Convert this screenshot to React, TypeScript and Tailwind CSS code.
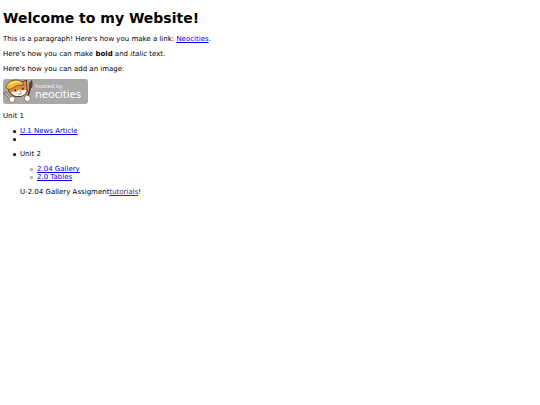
import React from "react";

const link = "text-[#0000ee] underline";
const item =
  "flex gap-[4px] before:mt-[3px] before:size-[3px] before:shrink-0 before:rounded-full before:bg-black before:content-['']";
const subItem =
  "flex gap-[4px] before:mt-[3px] before:size-[3px] before:shrink-0 before:rounded-full before:border before:border-[#777777] before:content-['']";

function HostedBadge() {
  return (
    <svg
      role="img"
      aria-label="hosted by neocities"
      viewBox="0 0 85 25"
      className="block h-[25px] w-[85px]"
    >
      <rect x="0" y="0" width="85" height="25" rx="3" fill="#a9a9a9" />
      {/* wrench */}
      <path d="M1.6 13.2 L8 20" stroke="#4e4e4e" strokeWidth="2.4" />
      <path d="M0.6 14.6 L2.4 15 L3 12.6" fill="none" stroke="#4e4e4e" strokeWidth="1" />
      <path d="M2 13.6 L8 20" stroke="#dedede" strokeWidth="1.1" />
      {/* brush */}
      <path d="M24.8 18 L27.4 8" stroke="#5b2a20" strokeWidth="1.6" />
      <path d="M26.4 8 Q25.4 4 28.6 1.4 Q30 5 28.6 8.6 Z" fill="#a02c28" stroke="#43201c" strokeWidth="0.6" />
      {/* cat head */}
      <path
        d="M5.6 11.6 L6 6 L12 3 L17.4 3.6 L23.4 1 L23.8 8.2 Q25.6 12.4 22.4 15.2 Q18.4 18.6 13 17.6 Q7.2 16.6 5.6 11.6 Z"
        fill="#e58a3c"
        stroke="#4f3018"
        strokeWidth="0.9"
      />
      <path d="M8.2 13.4 Q11.4 11.6 14 12.6 L16 10.8 L18.4 11.6 Q21.4 10 23.4 11.6 Q23 15.4 18.6 16.8 Q12 18 8.2 13.4 Z" fill="#fffaf2" />
      {/* helmet */}
      <path
        d="M3 8.8 Q3.4 3.6 8.8 1.6 Q15.6 -0.4 20 3.6 L20.6 6 Q13.6 5.2 8.4 10 Q5.4 11.2 3 8.8 Z"
        fill="#eebb45"
        stroke="#6d4a18"
        strokeWidth="0.8"
      />
      <path d="M6.6 5.6 Q10.4 2.2 16 2.8" fill="none" stroke="#ffe38f" strokeWidth="1.2" />
      <ellipse cx="12.2" cy="11.4" rx="0.8" ry="1.2" fill="#2c2018" />
      <ellipse cx="19.8" cy="9.8" rx="0.8" ry="1.2" fill="#2c2018" />
      <path d="M16.2 12.2 L18 12 L17.2 13.2 Z" fill="#7c3329" />
      <path d="M15 15 Q17.2 15.8 19 14" fill="none" stroke="#5b3d22" strokeWidth="0.6" />
      {/* paws */}
      <circle cx="9" cy="20.4" r="3" fill="#ffffff" stroke="#6d5a4c" strokeWidth="0.7" />
      <circle cx="24.4" cy="19.4" r="3" fill="#ffffff" stroke="#6d5a4c" strokeWidth="0.7" />
      <text x="32" y="9" fill="#eeeeee" fontSize="6" fontFamily="'Noto Sans', sans-serif">
        hosted by
      </text>
      <text x="32" y="19" fill="#ffffff" fontSize="11" fontFamily="'Noto Sans', sans-serif">
        neocities
      </text>
    </svg>
  );
}

export default function App() {
  return (
    <main className="min-h-screen bg-white px-[3px] pt-[10px] font-['DejaVu_Sans',sans-serif] text-[7px] leading-[8px] text-black">
      <h1 className="text-[14px] leading-[16px] font-bold">Welcome to my Website!</h1>
      <p className="mt-[9px]">
        This is a paragraph! Here's how you make a link:{" "}
        <a href="#neocities" className={link}>Neocities</a>.
      </p>
      <p className="mt-[7px]">
        Here's how you can make <strong className="font-bold">bold</strong> and{" "}
        <em className="italic">italic</em> text.
      </p>
      <p className="mt-[7px]">Here's how you can add an image:</p>
      <div className="mt-[6px]">
        <HostedBadge />
      </div>
      <p className="mt-[8px]">Unit 1</p>
      <ul className="mt-[7px] pl-[10px]">
        <li className={item}>
          <a href="#news-article" className={link}>U.1 News Article</a>
        </li>
        <li className={`${item} min-h-[8px]`}></li>
        <li className={`${item} mt-[7px]`}>
          <div>
            <p>Unit 2</p>
            <ul className="mt-[7px] pl-[10px]">
              <li className={subItem}>
                <a href="#gallery" className={link}>2.04 Gallery</a>
              </li>
              <li className={subItem}>
                <a href="#tables" className={link}>2.0 Tables</a>
              </li>
            </ul>
            <p className="mt-[7px]">
              U-2.04 Gallery Assigment
              <a href="#tutorials" className="text-[#551a8b] underline">tutorials</a>!
            </p>
          </div>
        </li>
      </ul>
    </main>
  );
}
